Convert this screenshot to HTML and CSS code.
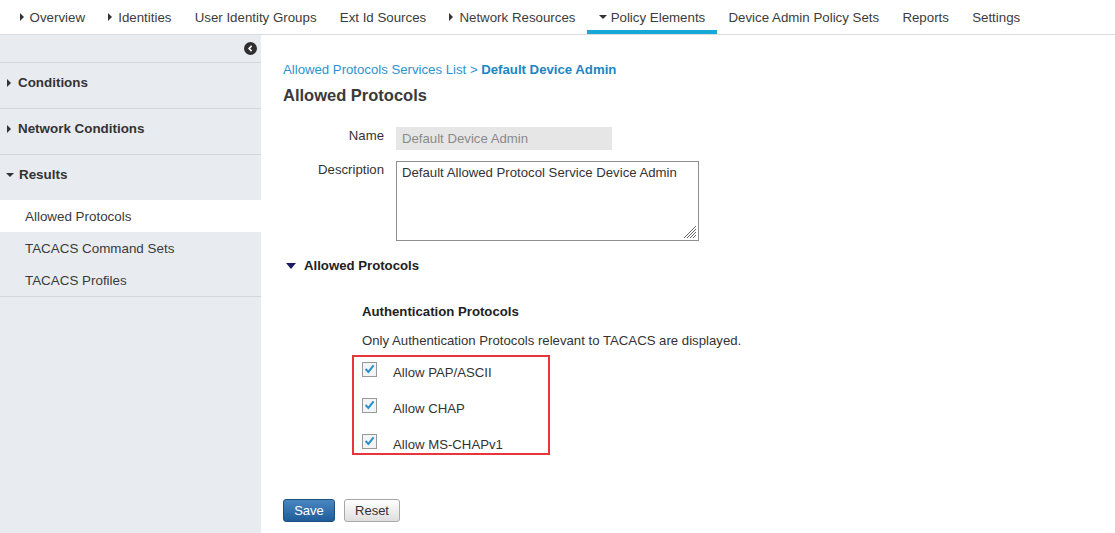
FILE: index.html
```html
<!DOCTYPE html>
<html lang="en">
<head>
<meta charset="utf-8">
<title>Allowed Protocols</title>
<link rel="stylesheet" href="styles.css">
</head>
<body>
<nav class="topnav">
  <a class="nav-item"><span class="tri-right"></span>Overview</a>
  <a class="nav-item"><span class="tri-right"></span>Identities</a>
  <a class="nav-item">User Identity Groups</a>
  <a class="nav-item">Ext Id Sources</a>
  <a class="nav-item"><span class="tri-right"></span>Network Resources</a>
  <a class="nav-item active"><span class="tri-down"></span>Policy Elements</a>
  <a class="nav-item">Device Admin Policy Sets</a>
  <a class="nav-item">Reports</a>
  <a class="nav-item">Settings</a>
</nav>
<div class="layout">
  <aside class="sidebar">
    <div class="side-top">
      <span class="collapse-btn">
        <svg width="13" height="13" viewBox="0 0 13 13"><circle cx="6.5" cy="6.5" r="6.5" fill="#2f2f2f"/><path d="M7.6 3.9 L5.1 6.5 L7.6 9.1" fill="none" stroke="#fff" stroke-width="1.6"/></svg>
      </span>
    </div>
    <div class="side-head"><span class="tri-right"></span>Conditions</div>
    <div class="side-head"><span class="tri-right"></span>Network Conditions</div>
    <div class="side-group">
      <div class="side-head open"><span class="tri-down"></span>Results</div>
      <div class="side-item selected">Allowed Protocols</div>
      <div class="side-item">TACACS Command Sets</div>
      <div class="side-item">TACACS Profiles</div>
    </div>
  </aside>
  <main class="content">
    <div class="breadcrumb">Allowed Protocols Services List &gt; <b>Default Device Admin</b></div>
    <h1 class="title">Allowed Protocols</h1>
    <div class="form">
      <label class="f-label">Name</label>
      <div class="f-input">Default Device Admin</div>
      <label class="f-label">Description</label>
      <div class="f-textarea">Default Allowed Protocol Service Device Admin
        <svg class="grip" width="16" height="16" viewBox="0 0 16 16"><path d="M15 3 L3 15 M15 6 L6 15 M15 9 L9 15 M15 12 L12 15" stroke="#666" stroke-width="1"/></svg>
      </div>
    </div>
    <div class="section-toggle"><span class="tri-navy"></span>Allowed Protocols</div>
    <div class="auth">
      <div class="auth-title">Authentication Protocols</div>
      <div class="auth-note">Only Authentication Protocols relevant to TACACS are displayed.</div>
      <div class="highlight">
        <div class="cb-row"><span class="cb"><svg width="14" height="14" viewBox="0 0 14 14"><path d="M2.8 7 L5.8 10.2 L11.4 3.2" fill="none" stroke="#2a92cc" stroke-width="2.2"/></svg></span><span class="cb-label">Allow PAP/ASCII</span></div>
        <div class="cb-row"><span class="cb"><svg width="14" height="14" viewBox="0 0 14 14"><path d="M2.8 7 L5.8 10.2 L11.4 3.2" fill="none" stroke="#2a92cc" stroke-width="2.2"/></svg></span><span class="cb-label">Allow CHAP</span></div>
        <div class="cb-row"><span class="cb"><svg width="14" height="14" viewBox="0 0 14 14"><path d="M2.8 7 L5.8 10.2 L11.4 3.2" fill="none" stroke="#2a92cc" stroke-width="2.2"/></svg></span><span class="cb-label">Allow MS-CHAPv1</span></div>
      </div>
    </div>
    <div class="buttons">
      <button class="btn btn-primary">Save</button>
      <button class="btn btn-default">Reset</button>
    </div>
  </main>
</div>
</body>
</html>
```

FILE: styles.css
```css
* { box-sizing: border-box; }
html, body { margin: 0; padding: 0; }
body {
  font-family: "Liberation Sans", Arial, sans-serif;
  color: #333;
  background: #fff;
  height: 533px;
  display: flex;
  flex-direction: column;
  overflow: hidden;
}
.topnav {
  display: flex;
  height: 35px;
  border-bottom: 1px solid #d9dcdf;
  padding-left: 8px;
  flex: none;
}
.nav-item {
  display: flex;
  align-items: center;
  padding: 4px 11.6px 0;
  font-size: 13.3px;
  color: #3c3c3c;
  height: 34px;
  border-bottom: 4px solid transparent;
  white-space: nowrap;
}
.nav-item.active { border-bottom-color: #18a8d8; }
.tri-right {
  display: inline-block;
  width: 0; height: 0;
  border-top: 4px solid transparent;
  border-bottom: 4px solid transparent;
  border-left: 4.5px solid #333;
  margin-right: 6px;
}
.tri-down {
  display: inline-block;
  width: 0; height: 0;
  border-left: 4.5px solid transparent;
  border-right: 4.5px solid transparent;
  border-top: 4.5px solid #333;
  margin-right: 4px;
}
.layout {
  flex: 1;
  display: flex;
}
.sidebar {
  width: 261px;
  flex: none;
  background: #e8ecf0;
}
.side-top {
  height: 28px;
  border-bottom: 1px solid #d3d7db;
  display: flex;
  justify-content: flex-end;
  align-items: center;
  padding-right: 4px;
}
.collapse-btn { display: flex; }
.side-head {
  display: flex;
  align-items: center;
  font-weight: bold;
  font-size: 13.4px;
  line-height: 18px;
  padding: 11px 0 16px 7px;
  border-bottom: 1px solid #d3d7db;
}
.side-head .tri-right { margin-right: 7px; }
.side-head .tri-down { margin-left: -1px; margin-right: 5px; }
.side-group { border-bottom: 1px solid #d3d7db; }
.side-head.open { border-bottom: none; }
.side-item {
  height: 32px;
  line-height: 33px;
  padding-left: 25px;
  font-size: 13.4px;
  color: #3a3a3a;
}
.side-item.selected { background: #fff; }
.content {
  flex: 1;
  padding: 26px 0 0 22px;
}
.breadcrumb {
  font-size: 13.2px;
  line-height: 18px;
  color: #2b93d1;
}
.breadcrumb b { color: #1b86c4; }
.title {
  margin: 6px 0 0;
  font-size: 16.5px;
  line-height: 20px;
  color: #3a3a3a;
}
.form {
  display: grid;
  grid-template-columns: 101px auto;
  column-gap: 12px;
  row-gap: 11px;
  margin-top: 22px;
  justify-content: start;
}
.f-label {
  text-align: right;
  font-size: 13.2px;
  line-height: 18px;
  color: #333;
}
.f-input {
  width: 216px;
  height: 23px;
  background: #e6e6e6;
  color: #8a8a8a;
  font-size: 13.2px;
  line-height: 23px;
  padding-left: 6px;
}
.f-textarea {
  position: relative;
  width: 303px;
  height: 80px;
  border: 1px solid #8e8e8e;
  font-size: 13.2px;
  line-height: 18px;
  padding: 2px 5px;
  color: #333;
}
.grip { position: absolute; right: 1px; bottom: 1px; }
.section-toggle {
  display: flex;
  align-items: center;
  margin-top: 16px;
  font-weight: bold;
  font-size: 13.2px;
  line-height: 18px;
  color: #222;
}
.tri-navy {
  display: inline-block;
  width: 0; height: 0;
  border-left: 5px solid transparent;
  border-right: 5px solid transparent;
  border-top: 6px solid #1c1c66;
  margin: 0 8px 0 3px;
}
.auth { padding-left: 79px; }
.auth-title {
  margin-top: 28px;
  font-weight: bold;
  font-size: 13.2px;
  line-height: 18px;
  color: #222;
}
.auth-note {
  margin-top: 11px;
  font-size: 13.2px;
  line-height: 18px;
  color: #333;
}
.highlight {
  margin: 5px 0 0 -10px;
  width: 198px;
  border: 2px solid #e8353b;
  padding: 0 0 0 8px;
  display: flex;
  flex-direction: column;
  gap: 12px;
}
.cb-row {
  display: flex;
  align-items: flex-start;
  height: 24px;
}
.cb {
  width: 15px;
  height: 15px;
  margin-top: 5px;
  border: 1px solid #999;
  background: #f2f4f6;
  display: flex;
}
.cb svg { margin: -1px 0 0 0; }
.cb-label {
  margin-left: 16px;
  padding-top: 7px;
  font-size: 13.2px;
  line-height: 18px;
  color: #333;
}
.buttons {
  margin-top: 44px;
  display: flex;
  gap: 9px;
}
.btn {
  height: 23px;
  font-family: "Liberation Sans", Arial, sans-serif;
  font-size: 13px;
  border-radius: 3px;
  padding: 0;
  cursor: pointer;
}
.btn-primary {
  width: 52px;
  color: #fff;
  background: linear-gradient(#4a86c0, #1e5d9a);
  border: 1px solid #1b4f82;
}
.btn-default {
  width: 56px;
  color: #333;
  background: linear-gradient(#ffffff, #dedede);
  border: 1px solid #a8a8a8;
}
```
